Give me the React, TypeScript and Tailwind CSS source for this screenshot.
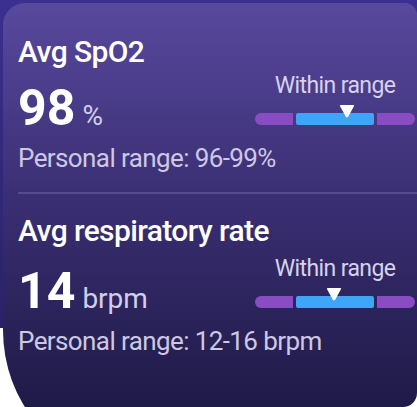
import React from 'react';

type Metric = {
    title: string;
    value: string;
    unit: string;
    range: string;
    marker: number; // marker centre, px from the bar's left end
    valueGap: string;
    statusGap: string;
};

const metrics: Metric[] = [
    { title: 'Avg SpO2', value: '98', unit: '%', range: 'Personal range: 96-99%', marker: 92, valueGap: 'mt-[13px]', statusGap: 'mt-[40px]' },
    { title: 'Avg respiratory rate', value: '14', unit: 'brpm', range: 'Personal range: 12-16 brpm', marker: 79, valueGap: 'mt-[17px]', statusGap: 'mt-[44px]' },
];

const Marker: React.FC<{ x: number }> = ({ x }) => (
    <svg
        width="18"
        height="13"
        viewBox="0 0 18 13"
        className="absolute top-[-8px]"
        style={{ left: x - 9 }}
    >
        <path d="M2.2 1.6Q1.2 0 3 0H15Q16.8 0 15.8 1.6L10.3 11.4Q9 13.2 7.7 11.4Z" fill="#ffffff" />
    </svg>
);

const RangeBar: React.FC<{ marker: number }> = ({ marker }) => (
    <div className="relative mt-[15px] flex h-[12px] w-[160px] gap-[3px]">
        <div className="w-[38px] rounded-l-full rounded-r-[2px] bg-[#8a4cc3]" />
        <div className="w-[78px] rounded-[2px] bg-[#3fa5f6]" />
        <div className="w-[38px] rounded-r-full rounded-l-[2px] bg-[#8a4cc3]" />
        <Marker x={marker} />
    </div>
);

// title / value on the left, status bar on the right, range line across the whole width
const MetricBlock: React.FC<{ m: Metric }> = ({ m }) => (
    <div className="grid grid-cols-[minmax(0,1fr)_160px] pr-[2px]">
        <div className="col-start-1 row-start-1 text-[30px] leading-[36px] font-medium tracking-[-0.6px] whitespace-nowrap text-white">
            {m.title}
        </div>
        <div className={`${m.valueGap} col-start-1 row-start-2 flex h-[50px] items-baseline`}>
            <span className="text-[50px] leading-[50px] font-bold text-white">{m.value}</span>
            <span className="ml-[7px] text-[28px] leading-[50px] text-[#d3cee9]">{m.unit}</span>
        </div>
        <div className={`${m.statusGap} col-start-2 row-span-2 row-start-1 flex flex-col items-center self-start`}>
            <div className="text-[23px] leading-[24px] tracking-[-0.6px] whitespace-nowrap text-[#d6d2ec]">Within range</div>
            <RangeBar marker={m.marker} />
        </div>
        <div className="col-span-2 row-start-3 mt-[10px] text-[26px] leading-[30px] tracking-[-0.6px] whitespace-nowrap text-[#cdc8e3]">
            {m.range}
        </div>
    </div>
);

const App: React.FC = () => {
    return (
        <div
            className="h-[407px] w-[417px] overflow-hidden rounded-br-[14px] bg-[linear-gradient(180deg,#3b2f90_0px,#2a2268_328px,#ffffff_328px)]"
            style={{ fontFamily: 'Roboto, "Noto Sans", sans-serif' }}
        >
            <div className="ml-[3px] mt-[3px] h-[460px] w-[414px] rounded-tl-[22px] rounded-tr-[12px] rounded-bl-[119px_133px] bg-[linear-gradient(180deg,#58499d_0px,#3b2f74_190px,#1e1a46_407px)] pl-[15px] pt-[31px]">
                <MetricBlock m={metrics[0]} />
                <div className="mb-[19px] mt-[19px] h-[2px] bg-[#564a91]" />
                <MetricBlock m={metrics[1]} />
            </div>
        </div>
    );
};

export default App;
